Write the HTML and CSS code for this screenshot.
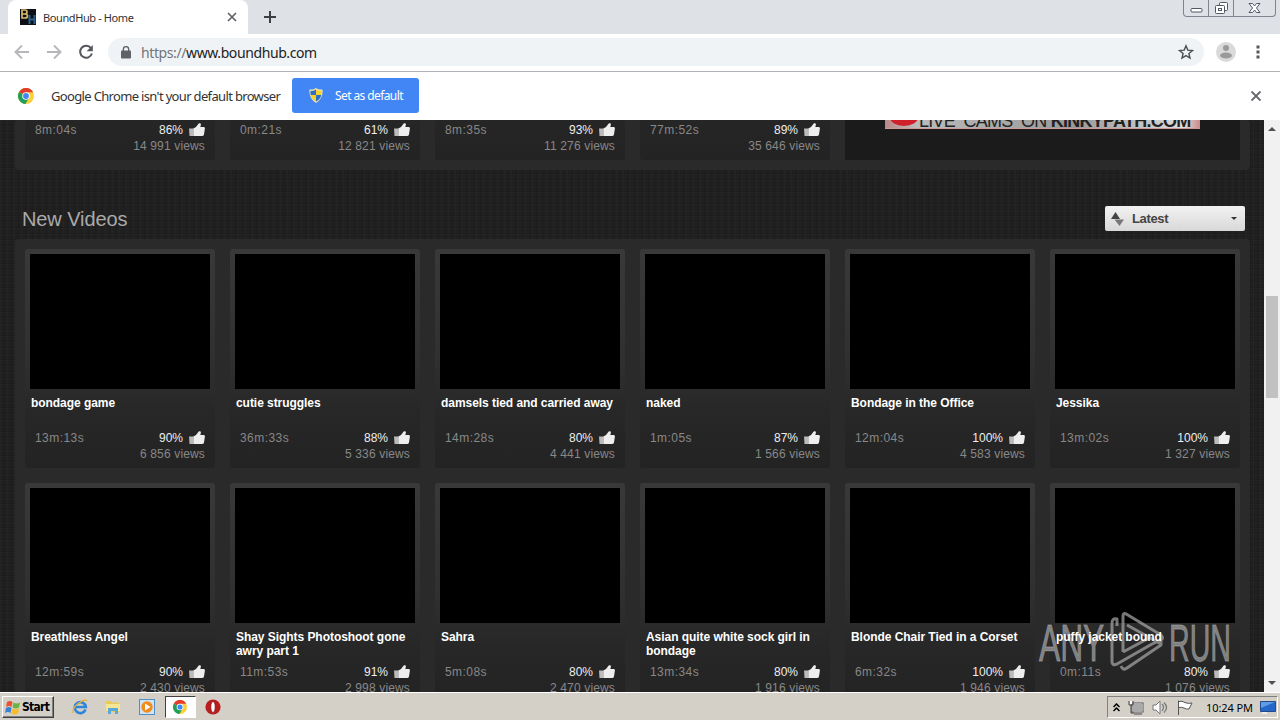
FILE: index.html
```html
<!DOCTYPE html>
<html lang="en">
<head>
  <meta charset="UTF-8">
  <title>BoundHub - Home</title>
  <link rel="stylesheet" href="styles.css">
</head>
<body>

  <!-- shared icons -->
  <svg class="defs" width="0" height="0">
    <symbol id="thumb" viewBox="0 0 16 14">
      <path fill="#bbb" d="M0 5.500h4.300V13H.5z"/>
      <path fill="#eee" d="M4.300 5.500 7 4 9.500.700c1.500-1 2.800.100 2.300 1.500L11.300 4H15q1 .3.900 1.500L15 11.500q-.4 1.500-2 1.500H4.300z"/>
    </symbol>
    <symbol id="chrome" viewBox="0 0 16 16">
      <circle cx="8" cy="8" r="8" fill="#fbd03b"/>
      <path fill="#e33b2e" d="M8 8 1 4.100A8 8 0 0 1 15.100 4.300H8z"/>
      <path fill="#22a05a" d="M1 4.100A8 8 0 0 0 7.400 16L11.300 9.500 8 8z"/>
      <circle cx="8" cy="8" r="3.800" fill="#fff"/>
      <circle cx="8" cy="8" r="2.900" fill="#4285f4"/>
    </symbol>
  </svg>

  <!-- tab strip -->
  <div class="tabs">
    <div class="tab">
      <svg class="favicon" width="16" height="16" viewBox="0 0 16 16">
        <rect width="16" height="16" fill="#0d1117"/>
        <path d="M2 1v8h3q2.500 0 2.500-2T5 5H2h3q2 0 2-2T5 1z" fill="none" stroke="#d9b56a" stroke-width="1.700"/>
        <path d="M9.500 6v9M14.500 6v9M9.500 10.500h5" stroke="#2b6088" stroke-width="2"/>
      </svg>
      <span class="tab-title">BoundHub - Home</span>
      <svg width="10" height="10" viewBox="0 0 10 10"><path d="M1 1l8 8M9 1 1 9" stroke="#5f6368" stroke-width="1.700"/></svg>
    </div>
    <svg class="new-tab" width="12" height="12" viewBox="0 0 12 12"><path d="M6 0v12M0 6h12" stroke="#3c4043" stroke-width="2"/></svg>
    <div class="window-buttons">
      <span><svg width="13" height="16" viewBox="0 0 13 16"><rect x="1" y="8.500" width="11" height="3.500" rx="1" fill="#fff" stroke="#535666"/></svg></span>
      <span><svg width="13" height="16" viewBox="0 0 13 16"><rect x="4.500" y="2.500" width="8" height="8" rx="1" fill="#fff" stroke="#535666"/><rect x=".5" y="5.500" width="9" height="8" rx="1" fill="#fff" stroke="#535666"/><rect x="3.500" y="8.500" width="3" height="2" fill="none" stroke="#535666"/></svg></span>
      <span class="wide"><svg width="13" height="16" viewBox="0 0 13 16"><path d="M1 3.500h3.500l2 2.500 2-2.500H12L8.500 8l3.500 4.500H8.500l-2-2.500-2 2.500H1L4.500 8z" fill="#fff" stroke="#535666"/></svg></span>
    </div>
  </div>

  <!-- address bar -->
  <div class="toolbar">
    <svg width="16" height="16" viewBox="0 0 16 16"><path d="M15 8H2M8 1.500 1.500 8 8 14.500" fill="none" stroke="#b5b7ba" stroke-width="1.900"/></svg>
    <svg width="16" height="16" viewBox="0 0 16 16"><path d="M1 8h13M8 1.500 14.500 8 8 14.500" fill="none" stroke="#b5b7ba" stroke-width="1.900"/></svg>
    <svg width="16" height="16" viewBox="0 0 16 16"><path d="M13 4.200A6 6 0 1 0 13.900 9.500" fill="none" stroke="#55585c" stroke-width="2"/><path d="M14.800 1v6.200H8.600z" fill="#55585c"/></svg>
    <div class="omnibox">
      <svg width="10" height="13" viewBox="0 0 10 13"><rect y="4.500" width="10" height="8" rx="1" fill="#5f6368"/><path d="M2.300 5V3.300a2.700 2.700 0 0 1 5.400 0V5" fill="none" stroke="#5f6368" stroke-width="1.400"/></svg>
      <span class="url"><i>https://</i>www.boundhub.com</span>
      <svg class="star" width="16" height="16" viewBox="0 0 16 16"><path d="m8 1.800 1.800 4.300 4.700.4-3.600 3 1.100 4.600-4-2.500-4 2.500 1.100-4.600-3.600-3 4.700-.4z" fill="none" stroke="#4b4e52" stroke-width="1.400"/></svg>
    </div>
    <svg class="avatar" width="20" height="20" viewBox="0 0 20 20"><circle cx="10" cy="10" r="10" fill="#dadada"/><circle cx="10" cy="6" r="3" fill="#9a9a9a"/><ellipse cx="10" cy="13.500" rx="6" ry="3" fill="#9a9a9a"/></svg>
    <svg class="menu" width="4" height="14" viewBox="0 0 4 14"><path d="M.5.500h3v3h-3zM.5 5.500h3v3h-3zM.5 10.500h3v3h-3z" fill="#55585c"/></svg>
  </div>

  <!-- default browser bar -->
  <div class="infobar">
    <svg width="16" height="16"><use href="#chrome"/></svg>
    <span class="infobar-text">Google Chrome isn't your default browser</span>
    <button class="set-default">
      <svg width="14" height="15" viewBox="0 0 14 15">
        <path d="M7 0q3 2 6.500 1.500Q14.500 10 7 15-.5 10 .5 1.500 4 2 7 0z" fill="#e8e2b5"/>
        <path d="M7 1.500V7H1.500V3Q5 3 7 1.500zM7 7h5.300q-.8 4-5.300 6.500z" fill="#2d6fc4"/>
        <path d="M7 1.500Q9 3 12.500 3v4H7zM7 7v6.500Q2.500 11 1.500 7z" fill="#f8d12a"/>
      </svg>
      <span>Set as default</span>
    </button>
    <svg class="infobar-close" width="10" height="10" viewBox="0 0 10 10"><path d="M.5.500l9 9M9.500.500l-9 9" stroke="#5f6368" stroke-width="1.900"/></svg>
  </div>

  <!-- web page -->
  <div class="view">
    <div class="page">
      <div class="panel top-panel">
        <div class="grid" id="topVideos"></div>
        <div class="ad">
          <div class="banner"><b class="lips"></b><span>LIVE&nbsp; CAMS&nbsp; ON <b>KINKYPATH.COM</b></span></div>
        </div>
      </div>
      <div class="headline">
        <h2>New Videos</h2>
        <div class="sort">
          <svg width="13" height="16" viewBox="0 0 13 16"><path d="M0 8 4.500 1 9 8z" fill="#444"/><path d="M3.500 8.500H13L8.500 15z" fill="#777"/></svg>
          <span>Latest</span>
          <svg width="6" height="3" viewBox="0 0 6 3"><path d="M0 0h6L3 3z" fill="#333"/></svg>
        </div>
      </div>
      <div class="panel">
        <div class="grid" id="newVideos"></div>
      </div>
    </div>
    <div class="scrollbar">
      <svg width="8" height="4" viewBox="0 0 8 4"><path d="M0 4 4 0l4 4z" fill="#505050"/></svg>
      <div class="scroll-thumb"></div>
      <svg width="8" height="4" viewBox="0 0 8 4"><path d="M0 0h8L4 4z" fill="#505050"/></svg>
    </div>
    <div class="watermark">
      <span>ANY</span>
      <svg width="56" height="62" viewBox="0 0 56 62"><path d="M8 15V8Q3 7 3 12V51Q3 55 8 53L43 33M14 41V5Q14 1 18 3.500L52 24Q55 27 52 29L43 33M18 14 52 33M14 41 40 27M52 30V34L18 57Q14 60 12 55" fill="none" stroke="currentColor" stroke-width="3" stroke-linejoin="round"/></svg>
      <span class="run">RUN</span>
    </div>
  </div>

  <!-- taskbar -->
  <div class="taskbar">
    <div class="start">
      <svg width="16" height="15" viewBox="0 0 16 15">
        <path d="M2 2q3-2 5.500 0L6.500 7Q4 5 1 7z" fill="#e8532b"/>
        <path d="M8.500 2.500q3 2 6.500 0L14 7.500q-3 2-6.500 0z" fill="#6db33f"/>
        <path d="M1 8q3-2 5.500 0l-1 5Q3 11 0 13z" fill="#3b7fd6"/>
        <path d="M7.500 8.500q3 2 6.500 0l-1 5q-3 2-6.500 0z" fill="#f7bc26"/>
      </svg>
      <span>Start</span>
    </div>
    <div class="launch">
      <span><svg width="16" height="16" viewBox="0 0 16 16"><path d="M13.500 10.500A5.500 5.500 0 1 1 13.800 8H4" fill="none" stroke="#2f86d8" stroke-width="2.700"/><path d="M1 14Q0 9 7 4t8-2" fill="none" stroke="#e4b339" stroke-width="1.300"/></svg></span>
      <span><svg width="16" height="16" viewBox="0 0 16 16"><path d="M1 2h5l1 1.500h7V13H1z" fill="#e9c85c"/><path d="M1 5h14v7H1z" fill="#f7e596"/><path d="M3 9h10v6h-3v-3H6v3H3z" fill="#5aa9dc"/></svg></span>
      <span><svg width="16" height="16" viewBox="0 0 16 16"><rect x=".5" y=".5" width="15" height="15" fill="#cfe3f5" stroke="#4f91c7"/><circle cx="8" cy="8" r="5.700" fill="#f28a1c"/><path d="M6 4.500 11.500 8 6 11.500z" fill="#fff"/></svg></span>
      <span class="active"><svg width="14" height="14"><use href="#chrome"/></svg></span>
      <span><svg width="16" height="16" viewBox="0 0 16 16"><circle cx="8" cy="8" r="7.600" fill="#b91d1d"/><ellipse cx="8" cy="8" rx="2.200" ry="5.500" fill="#fff" stroke="#7c0d0d" stroke-width=".7"/></svg></span>
    </div>
    <div class="tray">
      <svg width="7" height="9" viewBox="0 0 7 9"><path d="m.5 4 3-3 3 3M.5 8l3-3 3 3" fill="none" stroke="#000" stroke-width="1.500"/></svg>
      <svg width="16" height="15" viewBox="0 0 16 15"><rect x="4.500" y="3.500" width="10" height="8" fill="#aaa" stroke="#fff"/><rect x="4" y="3" width="11" height="9" fill="none" stroke="#555"/><path d="M6 14h8M1 1v4h4V1M3 5v8h3" fill="none" stroke="#444"/><path d="M2 1h2v3H2z" fill="#fff"/></svg>
      <svg width="17" height="15" viewBox="0 0 17 15"><path d="M1 5h3l4-4v13l-4-4H1z" fill="#fff" stroke="#777"/><path d="M10 4q3 3 0 7M12 2.500q5 5 0 10" fill="none" stroke="#777" stroke-width="1.200"/></svg>
      <svg width="16" height="15" viewBox="0 0 16 15"><path d="M1.500 15V.500M2 1.500q3-1 6 1 3 1.500 7 .5l-3 6q-3 .5-5-1-2.500-1-5-.5" fill="#fff" stroke="#555"/></svg>
      <span class="clock">10:24 PM</span>
      <svg width="16" height="13" viewBox="0 0 16 13"><path d="M.5.500h15v10H.5z" fill="#2467c9" stroke="#234b8c"/><path d="M1 1h14L1 7z" fill="#5f9de6"/><path d="M2 12h5" stroke="#eee" stroke-width="2"/></svg>
    </div>
  </div>

  <script>
    const topVideos = [
      ["", "8m:04s", 86, "14 991"],
      ["", "0m:21s", 61, "12 821"],
      ["", "8m:35s", 93, "11 276"],
      ["", "77m:52s", 89, "35 646"]
    ];
    const newVideos = [
      ["bondage game", "13m:13s", 90, "6 856"],
      ["cutie struggles", "36m:33s", 88, "5 336"],
      ["damsels tied and carried away", "14m:28s", 80, "4 441"],
      ["naked", "1m:05s", 87, "1 566"],
      ["Bondage in the Office", "12m:04s", 100, "4 583"],
      ["Jessika", "13m:02s", 100, "1 327"],
      ["Breathless Angel", "12m:59s", 90, "2 430"],
      ["Shay Sights Photoshoot gone awry part 1", "11m:53s", 91, "2 998"],
      ["Sahra", "5m:08s", 80, "2 470"],
      ["Asian quite white sock girl in bondage", "13m:34s", 80, "1 916"],
      ["Blonde Chair Tied in a Corset", "6m:32s", 100, "1 946"],
      ["puffy jacket bound", "0m:11s", 80, "1 076"]
    ];

    function renderVideos(id, list) {
      document.getElementById(id).innerHTML = list.map(([title, time, rating, views]) => `
        <div class="item">
          <div class="img"></div>
          <div class="title">${title}</div>
          <div class="info">
            <span class="time">${time}</span>
            <span class="rating">${rating}%</span>
            <svg width="16" height="14"><use href="#thumb"/></svg>
          </div>
          <div class="views">${views} views</div>
        </div>
      `).join("");
    }

    renderVideos("topVideos", topVideos);
    renderVideos("newVideos", newVideos);
  </script>

</body>
</html>
```

FILE: styles.css
```css
* {
  box-sizing: border-box;
}
body {
  margin: 0;
  height: 720px;
  display: flex;
  flex-direction: column;
  overflow: hidden;
  font-family: "DejaVu Sans", sans-serif;
}
svg {
  display: block;
  flex: none;
}
.defs {
  position: absolute;
}

/* browser */
.tabs {
  height: 34px;
  flex: none;
  display: flex;
  background: #dee1e6;
  padding-left: 8px;
}
.tab {
  width: 240px;
  display: flex;
  align-items: center;
  padding: 0 11px 0 12px;
  background: #fff;
  border-radius: 8px 8px 0 0;
}
.tab-title {
  flex: 1;
  margin-left: 7px;
  font: 11px "Noto Sans", sans-serif;
  letter-spacing: -0.4px;
  color: #333;
}
.new-tab {
  margin: 11px 0 0 16px;
}
.window-buttons {
  display: flex;
  height: 17px;
  margin: 0 4px 0 auto;
  border: 1px solid #80838d;
  border-top: 0;
  border-radius: 0 0 4px 4px;
}
.window-buttons span {
  width: 25px;
  display: flex;
  justify-content: center;
  border-right: 1px solid #80838d;
}
.window-buttons .wide {
  width: 41px;
  border: 0;
}
.toolbar {
  height: 38px;
  flex: none;
  display: flex;
  align-items: center;
  gap: 16px;
  padding: 0 20px 1px 14px;
  background: #fff;
  border-bottom: 1px solid #b0b2b5;
}
.omnibox {
  flex: 1;
  height: 28px;
  margin-left: -2px;
  padding: 0 10px 0 13px;
  display: flex;
  align-items: center;
  border-radius: 14px;
  background: #f0f3f6;
}
.url {
  margin-left: 10px;
  font: 14px "Noto Sans", sans-serif;
  letter-spacing: -0.4px;
  color: #222;
}
.url i {
  font-style: normal;
  color: #70757a;
}
.star {
  margin-left: auto;
}
.avatar {
  margin-left: -4px;
}
.menu {
  margin-left: 4px;
}
.infobar {
  height: 48px;
  flex: none;
  display: flex;
  align-items: center;
  padding: 0 19px 1px 18px;
  background: #fff;
}
.infobar-text {
  width: 241px;
  margin-left: 17px;
  white-space: nowrap;
  font: 13px "Noto Sans", sans-serif;
  letter-spacing: -0.66px;
  color: #333;
}
.set-default {
  width: 127px;
  height: 35px;
  display: flex;
  align-items: center;
  gap: 12px;
  padding: 0 0 0 17px;
  border: 0;
  border-radius: 3px;
  background: #4285f4;
  color: #fff;
  white-space: nowrap;
  font: 12px "Noto Sans", sans-serif;
  letter-spacing: -0.6px;
}
.infobar-close {
  margin-left: auto;
}

/* page */
.view {
  height: 572px;
  flex: none;
  display: flex;
  overflow: hidden;
  position: relative;
}
.page {
  flex: 1;
  height: 572px;
  overflow: hidden;
  padding: 0 14px 0 15px;
  background:
    repeating-linear-gradient(90deg, rgba(255, 255, 255, 0.018) 0 1px, transparent 1px 4px, rgba(0, 0, 0, 0.1) 4px 5px, transparent 5px 7px),
    repeating-linear-gradient(rgba(255, 255, 255, 0.015) 0 1px, transparent 1px 5px, rgba(0, 0, 0, 0.08) 5px 6px),
    #202020;
  font-family: "Liberation Sans", Arial, sans-serif;
}
.panel {
  width: 1235px;
  padding: 10px;
  border-radius: 4px;
  background: #2a2a2a;
}
.top-panel {
  height: 50px;
  padding-top: 0;
  display: flex;
  gap: 15px;
}
.grid {
  display: grid;
  grid-template-columns: repeat(6, 190px);
  gap: 15px;
}
.top-panel .grid {
  grid-template-columns: repeat(4, 190px);
  height: 40px;
  align-content: end;
  overflow: hidden;
}
.item {
  height: 219px;
  padding: 5px;
  border-radius: 3px;
  background: linear-gradient(#393939, #303030 50%, #272727 75%, #232323);
}
.img {
  height: 135px;
  background: #000;
}
.title {
  position: relative;
  z-index: 1;
  height: 42px;
  padding: 7px 0 0 1px;
  font-size: 12px;
  font-weight: bold;
  line-height: 14px;
  letter-spacing: -0.05px;
  color: #fff;
}
.info {
  display: flex;
  align-items: center;
  height: 14px;
  padding: 0 5px;
  font-size: 12px;
  color: #888;
}
.time {
  letter-spacing: 0.45px;
}
.rating {
  margin: 0 6px 0 auto;
  color: #eee;
}
.views {
  padding: 1px 5px 0;
  line-height: 16px;
  font-size: 12px;
  letter-spacing: 0.15px;
  text-align: right;
  color: #888;
}
.ad {
  width: 395px;
  height: 40px;
  padding-left: 40px;
  background: #1b1b1b;
}
.banner {
  position: relative;
  width: 315px;
  height: 9px;
  overflow: hidden;
  background: linear-gradient(90deg, #b88, #bbb 10%, #999 60%, #ddd 95%, #c88);
  border-bottom: 1px solid #c99;
}
.lips {
  position: absolute;
  left: 5px;
  top: -11px;
  width: 28px;
  height: 17px;
  border-radius: 50%;
  background: #d0202c;
}
.banner span {
  position: absolute;
  left: 34px;
  bottom: 0;
  white-space: nowrap;
  font-size: 18px;
  line-height: 14px;
  letter-spacing: -0.75px;
  color: #222;
}
.headline {
  height: 69px;
  display: flex;
  justify-content: space-between;
  padding: 36px 5px 0 7px;
}
.headline h2 {
  margin: 0;
  font-size: 20px;
  font-weight: normal;
  line-height: 26px;
  letter-spacing: -0.1px;
  color: #aaa;
}
.sort {
  width: 140px;
  height: 25px;
  display: flex;
  align-items: center;
  padding: 0 8px 0 6px;
  border-radius: 2px;
  background: linear-gradient(#f2f2f2, #d8d8d8);
  font-size: 13px;
  font-weight: bold;
  color: #444;
}
.sort span {
  flex: 1;
  margin-left: 8px;
  letter-spacing: -0.35px;
}
.scrollbar {
  width: 16px;
  display: flex;
  flex-direction: column;
  align-items: center;
  padding: 7px 0;
  background: #f1f1f1;
}
.scroll-thumb {
  width: 12px;
  height: 102px;
  margin: 165px 0 auto;
  background: #c1c1c1;
}
.watermark {
  position: absolute;
  left: 1039px;
  top: 490px;
  display: flex;
  align-items: center;
  color: rgba(170, 170, 170, 0.7);
  font-size: 52px;
  line-height: 62px;
}
.watermark span {
  width: 63px;
  padding-top: 2px;
  transform: scaleX(0.61);
  transform-origin: left;
  font-family: "Liberation Sans", Arial, sans-serif;
  -webkit-text-stroke: 1px rgba(170, 170, 170, 0.6);
}
.watermark svg {
  margin-left: 7px;
}
.watermark .run {
  margin-left: 4px;
  transform: scaleX(0.55);
}

/* taskbar */
.taskbar {
  height: 28px;
  flex: none;
  display: flex;
  align-items: center;
  padding: 1px 2px 0;
  background: #d4d0c8;
  border-top: 1px solid #fff;
}
.start {
  width: 52px;
  height: 22px;
  display: flex;
  align-items: center;
  padding-left: 2px;
  border: 1px solid;
  border-color: #fff #404040 #404040 #fff;
  box-shadow: inset -1px -1px #808080;
  font: bold 12px "DejaVu Sans Condensed", "DejaVu Sans", sans-serif;
  letter-spacing: -0.7px;
}
.start span {
  margin-left: 1px;
}
.launch {
  display: flex;
  margin-left: 9px;
}
.launch span {
  width: 33.500px;
  height: 22px;
  display: flex;
  align-items: center;
  justify-content: center;
}
.launch .active {
  width: 31px;
  margin: 0 1px;
  background: #fff;
  border: 1px solid;
  border-color: #404040 #fff #fff #404040;
}
.tray {
  height: 22px;
  margin-left: auto;
  display: flex;
  align-items: center;
  gap: 8px;
  padding: 0 1px 0 5px;
  border: 1px solid;
  border-color: #808080 #fff #fff #808080;
}
.clock {
  margin-left: 5px;
  width: 46px;
  white-space: nowrap;
  font: 11px "Noto Sans", sans-serif;
  letter-spacing: -0.1px;
}
```
